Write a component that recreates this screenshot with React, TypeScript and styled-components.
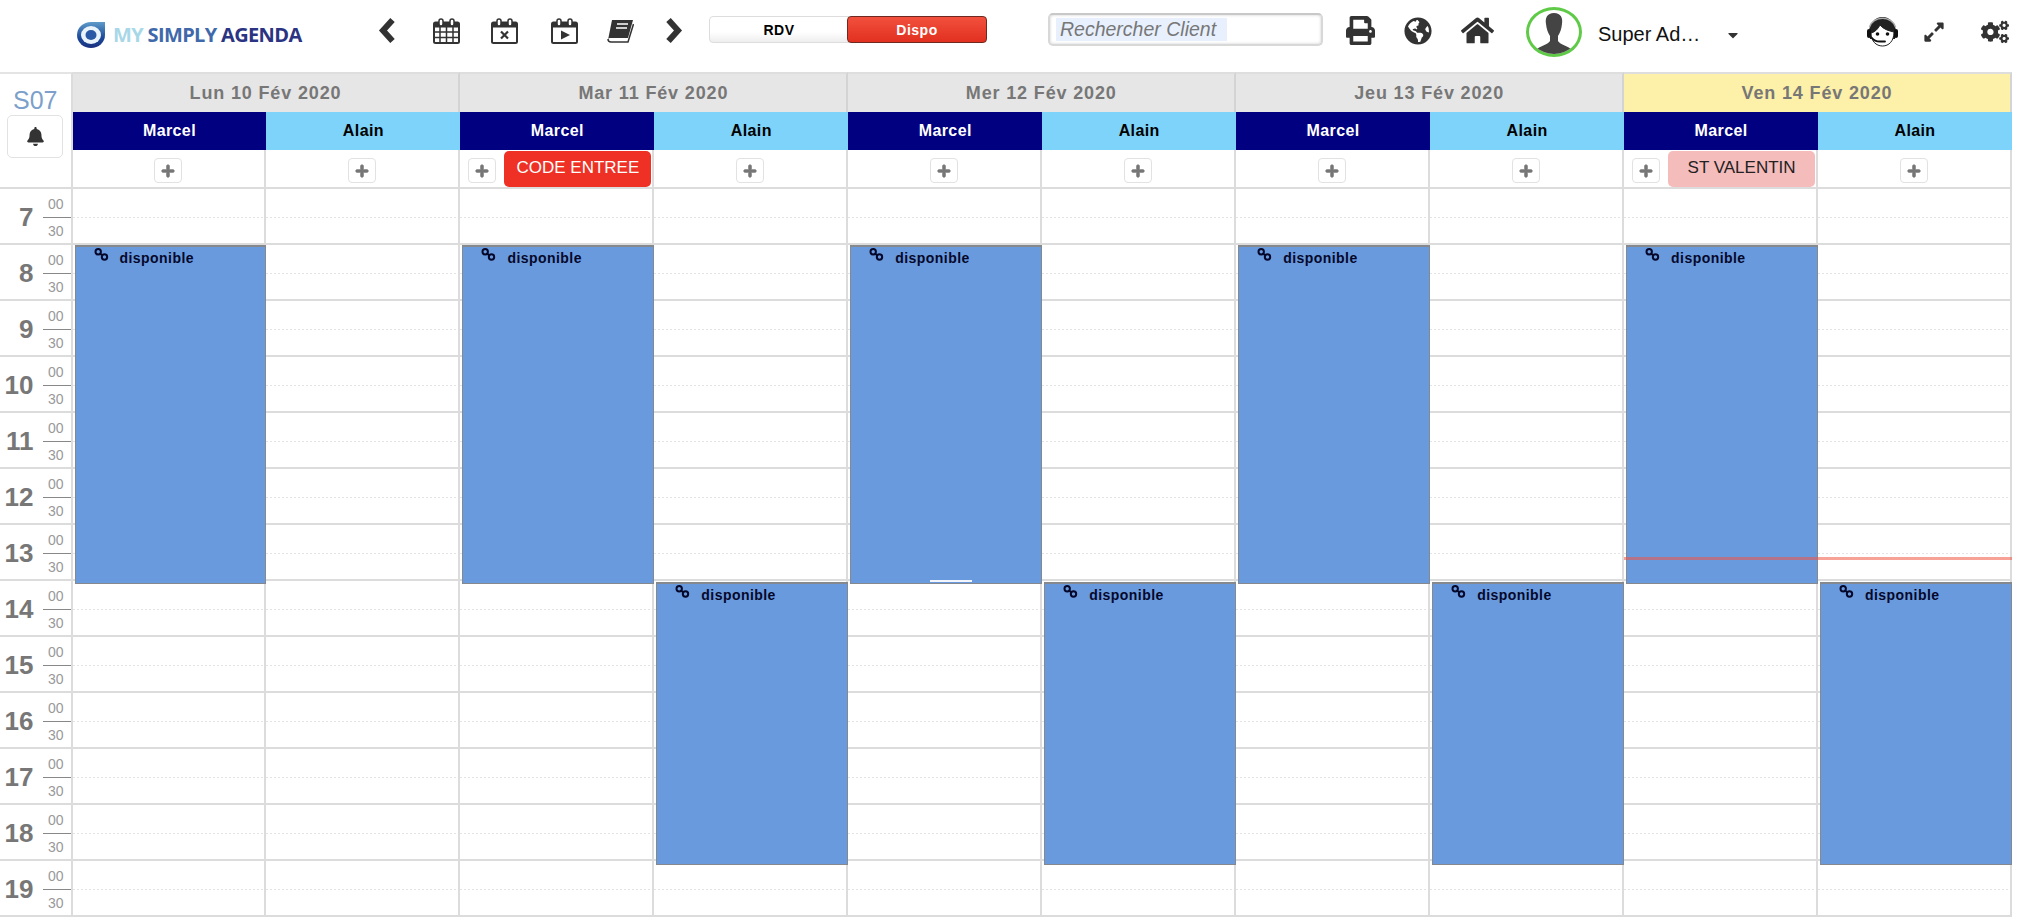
import React from "react";
import styled, { createGlobalStyle } from "styled-components";
import { FaBell, FaCaretDown, FaCogs, FaExpandAlt, FaGlobeAmericas, FaHome, FaPlus, FaPrint } from "react-icons/fa";

const Global = createGlobalStyle`
  html, body { margin: 0; padding: 0; background: #fff; overflow: hidden; }
  body { font-family: "Liberation Sans", Arial, sans-serif; }
  * { box-sizing: border-box; }
`;

const Page = styled.div`
  width: 2018px;
  height: 920px;
  overflow: hidden;
`;

const Toolbar = styled.header`
  display: flex;
  align-items: center;
  height: 72px;
  padding: 0 0 11px 76px;
  color: #333;
`;

const LogoLink = styled.div`
  display: flex;
  align-items: center;
  gap: 7px;
  width: 226px;
  margin-top: 8px;
  flex: none;
`;

const LogoText = styled.span`
  font-family: "Open Sans", sans-serif;
  font-size: 20px;
  font-weight: 700;
  letter-spacing: -0.65px;
  white-space: nowrap;
`;

const LogoWord = styled.span<{ $c: string }>`
  color: ${(p) => p.$c};
`;

const Slot = styled.div<{ $w: number; $ml: number; $dy?: number }>`
  flex: none;
  width: ${(p) => p.$w}px;
  margin-left: ${(p) => p.$ml}px;
  margin-top: ${(p) => p.$dy ?? 0}px;
  display: flex;
  align-items: center;
  justify-content: center;
  color: #333;
  & > svg { display: block; flex: none; }
`;

const Toggle = styled.div`
  flex: none;
  display: flex;
  width: 278px;
  height: 27px;
  margin: -2px 0 0 26px;
  border: 1px solid #ddd;
  border-radius: 4px;
  background: linear-gradient(#fff 60%, #eee);
  font-size: 14px;
  font-weight: bold;
  letter-spacing: 0.5px;
`;

const ToggleOption = styled.div<{ $active?: boolean }>`
  flex: 1;
  display: flex;
  align-items: center;
  justify-content: center;
  border-radius: 4px;
  color: ${(p) => (p.$active ? "#fff" : "#000")};
  background: ${(p) => (p.$active ? "linear-gradient(#f2503e, #e2301f)" : "transparent")};
  border: ${(p) => (p.$active ? "1.5px solid #6e2a20" : "none")};
  margin: ${(p) => (p.$active ? "-1px" : "0")};
`;

const Search = styled.div`
  flex: none;
  width: 275px;
  height: 33px;
  margin: -2px 0 0 61px;
  padding: 3px 0 3px 6px;
  border: 2px solid #d8d8d8;
  border-top-color: #c8c8c8;
  border-radius: 5px;
  background: #fff;
  box-shadow: inset 0 0 3px #ccc;
`;

const SearchFill = styled.div`
  width: 171px;
  height: 100%;
  padding-left: 4px;
  background: #e8f0fe;
  color: #777;
  font-size: 19.5px;
  font-style: italic;
  line-height: 23px;
  white-space: nowrap;
`;

const Avatar = styled.div`
  flex: none;
  width: 56px;
  height: 50px;
  margin: 3px 0 0 32px;
  border: 3px solid #5fca47;
  border-radius: 50%;
  overflow: hidden;
  display: flex;
  align-items: flex-end;
  justify-content: center;
`;

const UserName = styled.span`
  flex: none;
  width: 107px;
  margin: 8px 0 0 16px;
  font-size: 20px;
  color: #111;
  white-space: nowrap;
`;

const Board = styled.main`
  display: flex;
  width: 2016px;
`;

const TimeColumn = styled.div`
  flex: none;
  width: 72.5px;
`;

const WeekCell = styled.div`
  height: 117px;
  padding: 13px 8px 0;
  display: flex;
  flex-direction: column;
  align-items: center;
  border-top: 2px solid #e4e4e4;
  border-bottom: 2px solid #dcdcdc;
  border-right: 2px solid #dcdcdc;
`;

const WeekLabel = styled.div`
  font-size: 25px;
  line-height: 27px;
  margin-bottom: 1px;
  color: #7d9fcb;
`;

const BellButton = styled.div`
  width: 56px;
  height: 43px;
  display: flex;
  align-items: center;
  justify-content: center;
  background: #fff;
  border: 1px solid #e2e2e2;
  border-radius: 5px;
  color: #333;
`;

const HourRow = styled.div`
  position: relative;
  height: 56px;
  border-bottom: 2px solid #dcdcdc;
  border-right: 2px solid #dcdcdc;
`;

const HourNumber = styled.span`
  position: absolute;
  right: 37px;
  top: 14px;
  font-size: 26px;
  line-height: 28px;
  font-weight: bold;
  color: #777;
`;

const Minute = styled.span<{ $second?: boolean }>`
  position: absolute;
  left: 48px;
  top: ${(p) => (p.$second ? 34 : 7)}px;
  font-size: 14px;
  line-height: 16px;
  color: #999;
`;

const MinuteRule = styled.span`
  position: absolute;
  left: 43px;
  right: 0;
  top: 28px;
  height: 1px;
  background: #888;
`;

const DayColumn = styled.section`
  flex: none;
  width: 387.9px;
`;

const DayTitle = styled.div<{ $today?: boolean }>`
  height: 40px;
  display: flex;
  align-items: center;
  justify-content: center;
  background: ${(p) => (p.$today ? "#fdf0a8" : "#e6e6e6")};
  border-top: 2px solid #dedede;
  border-right: 2px solid #d4d4d4;
  color: #777;
  font-size: 18px;
  font-weight: bold;
  letter-spacing: 0.85px;
`;

const Resources = styled.div`
  display: flex;
`;

const ResourceColumn = styled.div`
  flex: 1 1 0;
  min-width: 0;
`;

const ResourceHead = styled.div<{ $dark: boolean }>`
  height: 38px;
  display: flex;
  align-items: center;
  justify-content: center;
  background: ${(p) => (p.$dark ? "#000080" : "#7dd3f9")};
  color: ${(p) => (p.$dark ? "#fff" : "#000")};
  font-size: 16px;
  font-weight: bold;
  letter-spacing: 0.4px;
`;

const AddRow = styled.div<{ $hasEvent: boolean }>`
  height: 39px;
  display: flex;
  align-items: flex-start;
  justify-content: ${(p) => (p.$hasEvent ? "flex-start" : "center")};
  padding-left: ${(p) => (p.$hasEvent ? "8px" : "0")};
  border-bottom: 2px solid #dcdcdc;
  border-right: 2px solid #dcdcdc;
`;

const AddButton = styled.div`
  flex: none;
  width: 28px;
  height: 25px;
  margin-top: 8px;
  display: flex;
  align-items: center;
  justify-content: center;
  border: 1px solid #e2e2e2;
  border-radius: 4px;
  background: #fff;
  color: #777;
`;

const DayEvent = styled.div<{ $bg: string; $fg: string }>`
  flex: none;
  width: 147px;
  height: 36px;
  margin: 1px 0 0 8px;
  padding-top: 7px;
  border-radius: 5px;
  background: ${(p) => p.$bg};
  color: ${(p) => p.$fg};
  font-size: 17px;
  line-height: 20px;
  text-align: center;
  white-space: nowrap;
`;

const Slots = styled.div`
  position: relative;
`;

const HalfHourCell = styled.div`
  height: 56px;
  border-bottom: 2px solid #dcdcdc;
  border-right: 2px solid #dcdcdc;
  background-image: linear-gradient(to right, #e4e4e4 50%, transparent 50%);
  background-size: 4px 1px;
  background-repeat: repeat-x;
  background-position: 0 28px;
`;

const Block = styled.div<{ $top: number; $height: number }>`
  position: absolute;
  left: 2px;
  right: 0;
  top: ${(p) => p.$top}px;
  height: ${(p) => p.$height}px;
  padding: 1px 0 0 18px;
  display: flex;
  align-items: flex-start;
  background: #6a9ade;
  border: 1px solid #85888c;
  border-top-width: 2px;
`;

const BlockLabel = styled.span`
  margin: 2px 0 0 11px;
  font-size: 14px;
  line-height: 16px;
  font-weight: bold;
  letter-spacing: 0.45px;
  color: #05082a;
`;

const ResizeMark = styled.span`
  position: absolute;
  left: 79px;
  bottom: 1px;
  width: 42px;
  height: 2px;
  background: #f2f5fb;
`;

const NowLine = styled.div`
  position: absolute;
  left: 0;
  right: 0;
  top: 368px;
  height: 3px;
  background: rgba(240, 84, 66, 0.55);
`;

const CalendarFrame: React.FC<{ children: React.ReactNode }> = ({ children }) => (
  <svg width="27" height="26" viewBox="0 0 27 26">
    <rect x="1" y="4.5" width="25" height="20.5" rx="1.5" fill="#fff" stroke="#333" strokeWidth="2" />
    <rect x="1" y="4" width="25" height="5.5" fill="#333" />
    <rect x="6" y="1" width="4" height="7" rx="2" fill="#fff" stroke="#333" strokeWidth="1.5" />
    <rect x="17" y="1" width="4" height="7" rx="2" fill="#fff" stroke="#333" strokeWidth="1.5" />
    {children}
  </svg>
);

const Chevron: React.FC<{ points: string }> = ({ points }) => (
  <svg width="18" height="25" viewBox="0 0 18 25">
    <polyline points={points} fill="none" stroke="#333" strokeWidth="6" strokeLinejoin="miter" />
  </svg>
);

const LogoMark = () => (
  <svg width="30" height="28" viewBox="0 0 30 28">
    <defs>
      <linearGradient id="lg" x1="0" y1="0" x2="0" y2="1">
        <stop offset="0" stopColor="#5f9bc9" />
        <stop offset="0.6" stopColor="#1c4a9a" />
        <stop offset="1" stopColor="#1a2f80" />
      </linearGradient>
    </defs>
    <path d="M15 1 H29 V14 A14 13 0 1 1 15 1 Z" fill="url(#lg)" />
    <ellipse cx="15" cy="14" rx="10" ry="9" fill="#eaf4fb" />
    <ellipse cx="15" cy="14" rx="5.5" ry="5" fill="#2a5aa6" />
  </svg>
);

const Silhouette = () => (
  <svg width="46" height="44" viewBox="0 0 46 44">
    <path d="M23 3 C16 3 14 8 15 14 C15.5 19 17 23 19 26 V31 C17 35 8 36 5 40 L4 44 H42 L41 40 C38 36 29 35 27 31 V26 C29 23 30.5 19 31 14 C32 8 30 3 23 3 Z" fill="#444" />
  </svg>
);

const HeadsetFace = () => (
  <svg width="35" height="32" viewBox="0 0 35 32">
    <path d="M4 17 A13.5 15 0 0 1 31 17 L30 24 L5 24 Z" fill="#222" />
    <path d="M4.5 12 A13.5 12 0 0 1 30.5 12" fill="none" stroke="#aaa" strokeWidth="1.5" />
    <path d="M6 18 C10 17 13 14 15 10 C18 14 24 16 29 17 C29 26 24 31 17.5 31 C11 31 6 26 6 18 Z" fill="#fff" stroke="#222" strokeWidth="1" />
    <circle cx="12.5" cy="19" r="1.8" fill="#111" />
    <circle cx="22.5" cy="19" r="1.8" fill="#111" />
    <path d="M7 23 C9 26 12 26.5 15 26.5 H20" fill="none" stroke="#111" strokeWidth="1.8" strokeLinecap="round" />
    <rect x="2" y="14" width="4" height="9" rx="2" fill="#111" />
    <rect x="29" y="14" width="4" height="9" rx="2" fill="#111" />
  </svg>
);

const ChainLink = () => (
  <svg width="15" height="13" viewBox="0 0 15 13">
    <circle cx="4.2" cy="3.8" r="2.7" fill="none" stroke="#05082a" strokeWidth="2" />
    <circle cx="10.5" cy="9" r="2.7" fill="none" stroke="#05082a" strokeWidth="2" />
    <path d="M6 5.5 L8.5 7.5" stroke="#05082a" strokeWidth="2" />
  </svg>
);

interface Day {
  title: string;
  today?: boolean;
  event?: { label: string; bg: string; fg: string };
  alainBlock: boolean;
  resize?: boolean;
}

const days: Day[] = [
  { title: "Lun 10 Fév 2020", alainBlock: false },
  { title: "Mar 11 Fév 2020", alainBlock: true, event: { label: "CODE ENTREE", bg: "#ee3124", fg: "#fff" } },
  { title: "Mer 12 Fév 2020", alainBlock: true, resize: true },
  { title: "Jeu 13 Fév 2020", alainBlock: true },
  { title: "Ven 14 Fév 2020", alainBlock: true, today: true, event: { label: "ST VALENTIN", bg: "#f5bcbc", fg: "#222" } },
];

const hours = [7, 8, 9, 10, 11, 12, 13, 14, 15, 16, 17, 18, 19];

const Availability: React.FC<{ top: number; height: number; resize?: boolean }> = ({ top, height, resize }) => (
  <Block $top={top} $height={height}>
    <ChainLink />
    <BlockLabel>disponible</BlockLabel>
    {resize && <ResizeMark />}
  </Block>
);

export default function App() {
  return (
    <Page>
      <Global />
      <Toolbar>
        <LogoLink>
          <LogoMark />
          <LogoText>
            <LogoWord $c="#a8d8e8">MY </LogoWord>
            <LogoWord $c="#3f69aa">SIMPLY </LogoWord>
            <LogoWord $c="#2b3482">AGENDA</LogoWord>
          </LogoText>
        </LogoLink>
        <Slot $w={17} $ml={76}>
          <Chevron points="14.5,2 5,12.5 14.5,23" />
        </Slot>
        <Slot $w={27} $ml={38}>
          <CalendarFrame>
            <path d="M1 14 H26 M1 19.5 H26 M7 9 V25 M13.5 9 V25 M20 9 V25" stroke="#333" strokeWidth="1.5" />
          </CalendarFrame>
        </Slot>
        <Slot $w={27} $ml={31}>
          <CalendarFrame>
            <path d="M10 13.5 L17 20.5 M17 13.5 L10 20.5" stroke="#333" strokeWidth="2.2" />
          </CalendarFrame>
        </Slot>
        <Slot $w={26} $ml={33}>
          <CalendarFrame>
            <path d="M10 12.5 L19 17 L10 21.5 Z" fill="#333" />
          </CalendarFrame>
        </Slot>
        <Slot $w={27} $ml={30}>
          <svg width="27" height="24" viewBox="0 0 27 24">
            <path d="M7 1 H26 L21 19 H3 C1.5 19 1 20 1 21 L5 1 Z" fill="#333" />
            <path d="M1 20 C1 22 2 23 4 23 H21 L26.5 5" fill="none" stroke="#333" strokeWidth="1.5" />
            <path d="M10 5 H21 M9 9 H20" stroke="#fff" strokeWidth="1.5" />
          </svg>
        </Slot>
        <Slot $w={18} $ml={31}>
          <Chevron points="3.5,2 13,12.5 3.5,23" />
        </Slot>
        <Toggle>
          <ToggleOption>RDV</ToggleOption>
          <ToggleOption $active>Dispo</ToggleOption>
        </Toggle>
        <Search>
          <SearchFill>Rechercher Client</SearchFill>
        </Search>
        <Slot $w={31} $ml={22}>
          <FaPrint size={29} />
        </Slot>
        <Slot $w={29} $ml={27}>
          <FaGlobeAmericas size={28} />
        </Slot>
        <Slot $w={33} $ml={29}>
          <FaHome size={33} />
        </Slot>
        <Avatar>
          <Silhouette />
        </Avatar>
        <UserName>Super Ad…</UserName>
        <Slot $w={10} $ml={23} $dy={8}>
          <FaCaretDown size={16} />
        </Slot>
        <Slot $w={35} $ml={127}>
          <HeadsetFace />
        </Slot>
        <Slot $w={22} $ml={23} $dy={3}>
          <FaExpandAlt size={22} />
        </Slot>
        <Slot $w={27} $ml={36} $dy={3}>
          <FaCogs size={28} />
        </Slot>
      </Toolbar>
      <Board>
        <TimeColumn>
          <WeekCell>
            <WeekLabel>S07</WeekLabel>
            <BellButton>
              <FaBell size={19} />
            </BellButton>
          </WeekCell>
          {hours.map((h) => (
            <HourRow key={h}>
              <HourNumber>{h}</HourNumber>
              <Minute>00</Minute>
              <MinuteRule />
              <Minute $second>30</Minute>
            </HourRow>
          ))}
        </TimeColumn>
        {days.map((d) => (
          <DayColumn key={d.title}>
            <DayTitle $today={d.today}>{d.title}</DayTitle>
            <Resources>
              <ResourceColumn>
                <ResourceHead $dark>Marcel</ResourceHead>
                <AddRow $hasEvent={!!d.event}>
                  <AddButton>
                    <FaPlus size={14} stroke="#777" strokeWidth={30} />
                  </AddButton>
                  {d.event && (
                    <DayEvent $bg={d.event.bg} $fg={d.event.fg}>
                      {d.event.label}
                    </DayEvent>
                  )}
                </AddRow>
                <Slots>
                  {hours.map((h) => (
                    <HalfHourCell key={h} />
                  ))}
                  <Availability top={56} height={339} resize={d.resize} />
                  {d.today && <NowLine />}
                </Slots>
              </ResourceColumn>
              <ResourceColumn>
                <ResourceHead $dark={false}>Alain</ResourceHead>
                <AddRow $hasEvent={false}>
                  <AddButton>
                    <FaPlus size={14} stroke="#777" strokeWidth={30} />
                  </AddButton>
                </AddRow>
                <Slots>
                  {hours.map((h) => (
                    <HalfHourCell key={h} />
                  ))}
                  {d.alainBlock && <Availability top={393} height={283} />}
                  {d.today && <NowLine />}
                </Slots>
              </ResourceColumn>
            </Resources>
          </DayColumn>
        ))}
      </Board>
    </Page>
  );
}
